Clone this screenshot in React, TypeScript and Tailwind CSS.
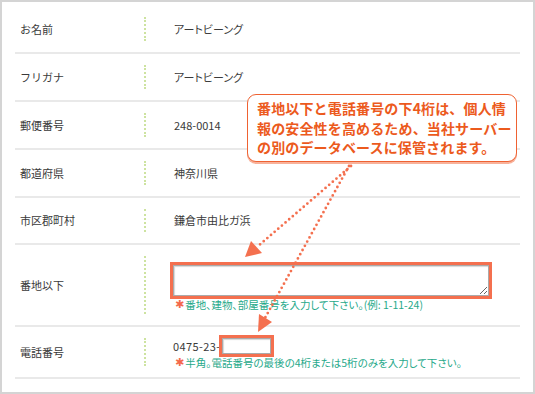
const rows = [
  { label: "お名前", value: "アートビーング" },
  { label: "フリガナ", value: "アートビーング" },
  { label: "郵便番号", value: "248-0014" },
  { label: "都道府県", value: "神奈川県" },
  { label: "市区郡町村", value: "鎌倉市由比ガ浜" },
];

const Divider = () => (
  <div className="my-[11px] w-0 self-stretch border-l-2 border-dotted border-[#cde3a0]" />
);

const Hint = ({ text }: { text: string }) => (
  <div className="flex items-center text-[10.5px] leading-[12px] text-[#1fa98a] [font-feature-settings:'palt']">
    <span className="mr-[1px] font-['DejaVu_Sans',sans-serif] text-[11px] leading-[12px] text-[#f4694c]">✱</span>
    <span>{text}</span>
  </div>
);

const Arrows = () => (
  <svg
    className="pointer-events-none absolute -left-[2px] -top-[2px]"
    width="535"
    height="394"
    viewBox="0 0 535 394"
  >
    <g stroke="#f4704f" strokeWidth="2.8" strokeLinecap="round" strokeDasharray="0 4.8" fill="none">
      <line x1="351" y1="166" x2="257" y2="247" />
      <line x1="349" y1="166" x2="265" y2="318" />
    </g>
    <g fill="#f4704f">
      <polygon points="245,257 262,253 251,241" />
      <polygon points="258,332 272,322 259,314" />
    </g>
  </svg>
);

export default function App() {
  return (
    <div className="relative h-[394px] w-[535px] overflow-hidden border-2 border-[#d4d4d4] bg-white font-['Noto_Sans_CJK_JP','Noto_Sans',sans-serif] text-[11px] text-[#3a3a3a]">
      <div className="ml-[13px] mt-[4px] w-[505px]">
        {rows.map((row, index) => (
          <div
            key={`row-${index}`}
            className={`flex items-center border-b-2 border-[#e9e9e9] ${index === 4 ? "h-[47px]" : "h-[48px]"}`}
          >
            <div className="w-[129px] pl-[5px]">{row.label}</div>
            <Divider />
            <div className="pl-[28px] [font-feature-settings:'palt']">{row.value}</div>
          </div>
        ))}

        <div className="flex h-[82px] items-center border-b-2 border-[#e9e9e9]">
          <div className="w-[129px] pl-[5px]">番地以下</div>
          <Divider />
          <div className="flex flex-col pl-[24px]">
            <div className="mt-[2px] h-[37px] w-[322px] border-[3px] border-[#f4704f]">
              <textarea className="block h-full w-full border border-[#aaaaaa] bg-white shadow-[inset_1px_1px_1px_#d8d8d8] outline-none" />
            </div>
            <div className="pl-[5px]">
              <Hint text="番地、建物、部屋番号を入力して下さい。(例: 1-11-24)" />
            </div>
          </div>
        </div>

        <div className="flex h-[52px] items-center border-b-2 border-[#e9e9e9]">
          <div className="w-[129px] pl-[5px]">電話番号</div>
          <Divider />
          <div className="flex flex-col pl-[27px]">
            <div className="flex items-center">
              <span className="tracking-[0.4px]">0475-23-</span>
              <div className="-ml-[1px] h-[22px] w-[55px] border-[3px] border-[#f4704f]">
                <input className="block h-full w-full border border-[#aaaaaa] bg-white shadow-[inset_1px_1px_1px_#d8d8d8] outline-none" />
              </div>
            </div>
            <div className="pl-[2px]">
              <Hint text="半角。電話番号の最後の4桁または5桁のみを入力して下さい。" />
            </div>
          </div>
        </div>
      </div>

      <div className="absolute left-[245px] top-[92px] h-[68px] w-[270px] rounded-[9px] border-[1.5px] border-[#ef6232] bg-white pl-[9px] pt-[4px] text-[14px] font-bold leading-[19.5px] tracking-[0.15px] text-[#ec5a1d] shadow-[0_2px_0_#f8b29b]">
        <div>番地以下と電話番号の下4桁は、個人情</div>
        <div>報の安全性を高めるため、当社サーバー</div>
        <div>の別のデータベースに保管されます。</div>
      </div>

      <Arrows />
    </div>
  );
}
